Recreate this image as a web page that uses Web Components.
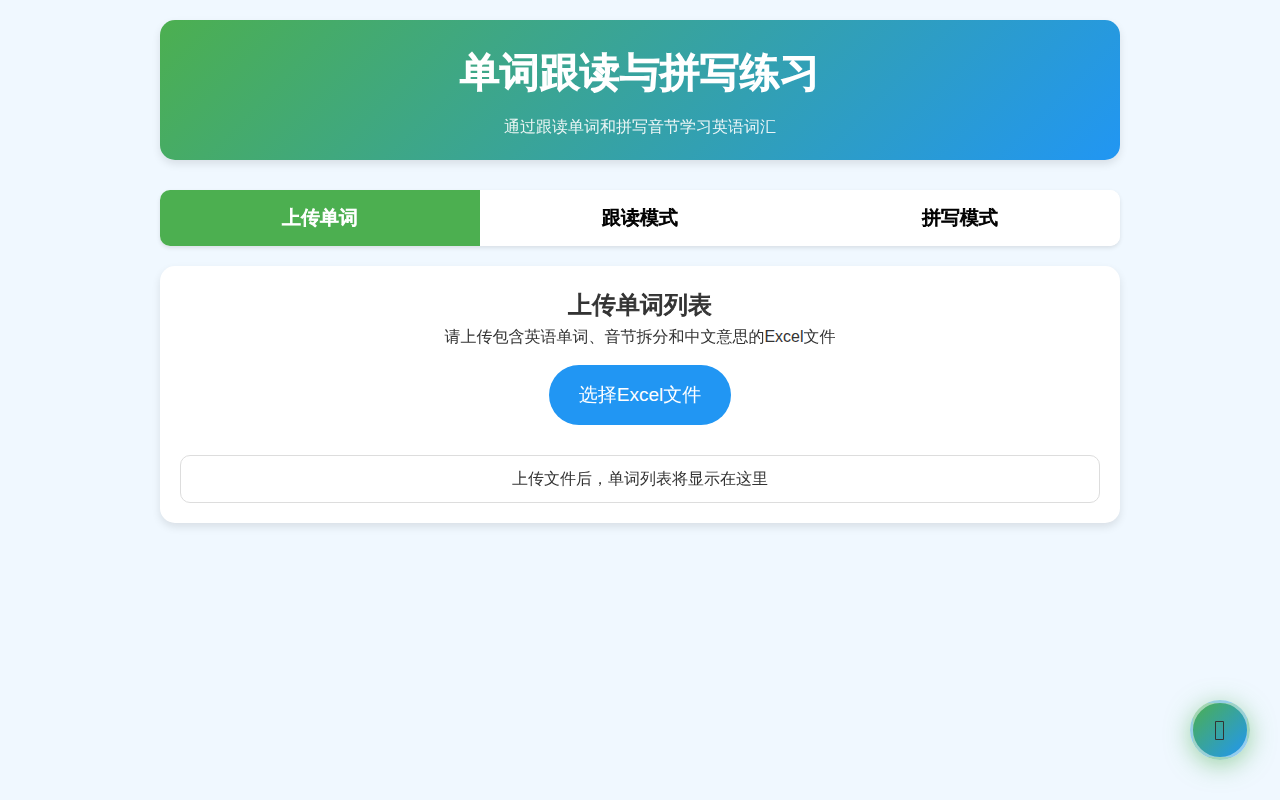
<!DOCTYPE html>
<html lang="zh-CN">
<head>
<meta charset="utf-8">
<meta name="viewport" content="width=device-width, initial-scale=1">
<title>单词跟读与拼写练习</title>
<style>
body {
  --app-font: "Liberation Sans", "WenQuanYi Zen Hei", "Noto Sans CJK SC", sans-serif;
  margin: 0;
  min-height: 100vh;
  background: #f0f8ff;
  color: #333;
  font-family: var(--app-font);
  font-size: 16px;
  line-height: 1.5;
}
</style>
</head>
<body>
<vocab-app></vocab-app>
<script>
const define = (name, html, ready) => {
  const template = document.createElement('template');
  template.innerHTML = '<style>:host,*{box-sizing:border-box}*{margin:0}</style>' + html;
  customElements.define(name, class extends HTMLElement {
    constructor() {
      super();
      this.attachShadow({ mode: 'open' }).append(template.content.cloneNode(true));
    }
    connectedCallback() { if (ready) ready(this); }
  });
};

define('page-banner', `
<style>
  :host { display: block; }
  header { padding: 20px; border-radius: 15px; text-align: center; color: #fff;
    background: linear-gradient(135deg, #4caf50, #2196f3); box-shadow: 0 4px 8px rgba(0,0,0,.1); }
  h1 { font-size: 40px; line-height: 64px; margin-bottom: 10px; -webkit-text-stroke: 2px currentColor; }
  p { line-height: 26px; opacity: .9; }
</style>
<header><h1><slot name="title"></slot></h1><p><slot></slot></p></header>`);

define('mode-tabs', `
<style>
  :host { display: block; }
  nav { display: flex; overflow: hidden; border-radius: 10px; background: #fff; box-shadow: 0 2px 4px rgba(0,0,0,.1); }
  button { flex: 1; border: 0; padding: 15px; font: bold 19px/26px var(--app-font);
    -webkit-text-stroke: 1px currentColor; color: #000; background: #fff; cursor: pointer; }
  button[aria-pressed="true"] { color: #fff; background: #4caf50; }
</style>
<nav>
  <button type="button" aria-pressed="true">上传单词</button>
  <button type="button" aria-pressed="false">跟读模式</button>
  <button type="button" aria-pressed="false">拼写模式</button>
</nav>`, host => {
  const buttons = [...host.shadowRoot.querySelectorAll('button')];
  buttons.forEach(button => {
    button.onclick = () => buttons.forEach(b => b.setAttribute('aria-pressed', b === button));
  });
});

define('upload-panel', `
<style>
  :host { display: block; }
  section { padding: 20px; border-radius: 15px; text-align: center; background: #fff; box-shadow: 0 4px 8px rgba(0,0,0,.1); }
  h2 { font-size: 24px; line-height: 38px; -webkit-text-stroke: 1px currentColor; }
  p { line-height: 26px; }
  button { margin: 15px 0 30px; padding: 15px 30px; border: 0; border-radius: 30px; color: #fff; background: #2196f3;
    font: 19px/30px var(--app-font); cursor: pointer; }
  .list { padding: 10px; border: 1px solid #ddd; border-radius: 10px; }
</style>
<section>
  <h2>上传单词列表</h2>
  <p>请上传包含英语单词、音节拆分和中文意思的Excel文件</p>
  <button type="button">选择Excel文件</button>
  <input type="file" accept=".xlsx,.xls" aria-label="选择Excel文件" hidden>
  <div class="list"><p>上传文件后，单词列表将显示在这里</p></div>
</section>`, host => {
  const root = host.shadowRoot;
  root.querySelector('button').onclick = () => root.querySelector('input').click();
});

define('float-button', `
<style>
  :host { position: fixed; right: 30px; bottom: 40px; display: block; }
  button { display: grid; place-items: center; width: 60px; height: 60px; padding: 0; border: 3px solid rgba(255,255,255,.5);
    border-radius: 50%; color: #333; background: linear-gradient(135deg, #4caf50, #2196f3);
    box-shadow: 0 5px 25px rgba(76,175,80,.5); cursor: pointer; }
  svg { display: block; }
</style>
<button type="button" aria-label="助手">
  <svg width="10" height="20" viewBox="0 0 10 20" fill="none" stroke="currentColor" aria-hidden="true"><path d="M.5 1.5h8v18h-8z"/></svg>
</button>`);

define('vocab-app', `
<style>
  :host { display: block; max-width: 1000px; margin: 0 auto; padding: 20px; }
  page-banner { margin-bottom: 30px; }
  mode-tabs { margin-bottom: 20px; }
</style>
<page-banner><span slot="title">单词跟读与拼写练习</span>通过跟读单词和拼写音节学习英语词汇</page-banner>
<mode-tabs></mode-tabs>
<upload-panel></upload-panel>
<float-button></float-button>`);
</script>
</body>
</html>
